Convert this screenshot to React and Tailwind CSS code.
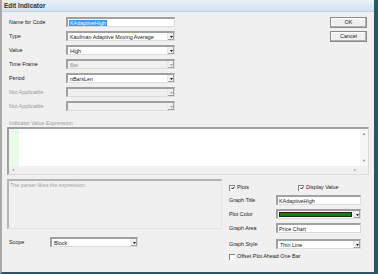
import React from 'react';

const Arrow = ({ disabled }) => (
  <div className="w-[7px] h-full bg-[#f0f0f0] border-l border-l-[#e6e6e6] flex items-center justify-center shadow-[inset_-1px_-1px_0_#a0a0a0]">
    <svg width="3" height="2" viewBox="0 0 3 2">
      <path d="M0 0 H3 L1.5 2 Z" fill={disabled ? '#a0a0a0' : '#111'} />
    </svg>
  </div>
);

const Combo = ({ value, disabled, className = '' }) => (
  <div
    className={`h-[10px] flex border-t-2 border-l-2 border-t-[#a0a0a0] border-l-[#a0a0a0] border-r border-b border-r-[#dcdcdc] border-b-[#dcdcdc] ${
      disabled ? 'bg-[#f0f0f0] text-[#9a9a9a]' : 'bg-white'
    } ${className}`}
  >
    <div className="flex-1 pl-[2px] leading-[8px] overflow-hidden whitespace-nowrap">{value}</div>
    <Arrow disabled={disabled} />
  </div>
);

const Input = ({ children, className = '' }) => (
  <div
    className={`h-[10px] bg-white border-t-2 border-l-2 border-t-[#a0a0a0] border-l-[#a0a0a0] border-r border-b border-r-[#dcdcdc] border-b-[#dcdcdc] pl-[1px] leading-[8px] whitespace-nowrap overflow-hidden ${className}`}
  >
    {children}
  </div>
);

const Check = ({ checked }) => (
  <div className="w-[6px] h-[6px] shrink-0 bg-white border-t border-l border-[#808080] border-r-[#e0e0e0] border-b-[#e0e0e0] flex items-center justify-center">
    {checked && (
      <svg width="4" height="4" viewBox="0 0 4 4">
        <path d="M0.4 1.8 L1.5 3 L3.6 0.6" stroke="#000" strokeWidth="1" fill="none" />
      </svg>
    )}
  </div>
);

const Button = ({ children }) => (
  <div className="h-[11px] bg-[#f0f0f0] border border-[#8a8a8a] shadow-[inset_-1px_-1px_0_#b0b0b0,inset_1px_1px_0_#ffffff] flex items-center justify-center">
    {children}
  </div>
);

const rows = [
  { label: 'Name for Code', kind: 'input' },
  { label: 'Type', value: 'Kaufman Adaptive Moving Average' },
  { label: 'Value', value: 'High' },
  { label: 'Time Frame', value: 'Bar', disabled: true },
  { label: 'Period', value: 'nBarsLen' },
  { label: 'Not Applicable', value: '', disabled: true, grayLabel: true },
  { label: 'Not Applicable', value: '', disabled: true, grayLabel: true },
];

export default function App() {
  return (
    <div className="w-[378px] h-[274px] bg-[#f0f0f0] flex flex-col overflow-hidden font-['Liberation_Sans',Arial,sans-serif] text-[5.4px] text-[#1a1a1a] border-l-2 border-l-[#a8a8a8] border-r-4 border-r-[#1d5a6b] border-b-2 border-b-[#1d5a6b]">
      <div className="h-[12px] shrink-0 bg-gradient-to-b from-[#e9f0f8] to-[#d3e2f1] border-b border-b-[#c2d3e5] pl-[2px] flex items-center font-bold text-[6.5px] text-[#333]">
        Edit Indicator
      </div>

      <div className="flex-1 flex flex-col pl-[5px] pr-[5px] pt-[5px]">
        <div className="flex justify-between">
          <div className="flex flex-col gap-[4px]">
            {rows.map((r, i) => (
              <div key={i} className="flex items-center">
                <div className={`w-[59px] pl-[2px] ${r.grayLabel ? 'text-[#9a9a9a]' : ''}`}>{r.label}</div>
                {r.kind === 'input' ? (
                  <Input className="w-[109px]">
                    <span className="bg-[#3399ff] text-white px-[1px]">KAdaptiveHigh</span>
                  </Input>
                ) : (
                  <Combo className="w-[109px]" value={r.value} disabled={r.disabled} />
                )}
              </div>
            ))}
          </div>
          <div className="flex flex-col gap-[3px] w-[37px] mr-[2px]">
            <Button>OK</Button>
            <Button>Cancel</Button>
          </div>
        </div>

        <div className="mt-[8px] h-[8px] pl-[2px] text-[#9a9a9a] leading-[8px]">Indicator Value Expression</div>

        <div className="h-[48px] flex flex-col border-t-2 border-l-2 border-t-[#a0a0a0] border-l-[#a0a0a0] border-r border-b border-r-[#dcdcdc] border-b-[#dcdcdc] bg-white">
          <div className="flex-1 flex">
            <div className="w-[10px] bg-[#eafbea]" />
            <div className="flex-1" />
            <div className="w-[8px] bg-[#f6f6f6] flex flex-col items-center justify-between py-[3px] text-[#8a8a8a] text-[4px] leading-[4px]">
              <span>▲</span>
              <span>▼</span>
            </div>
          </div>
          <div className="h-[8px] bg-[#f0f0f0] flex items-center justify-between pl-[3px] pr-[12px] text-[#8a8a8a] text-[4px]">
            <span>◂</span>
            <span>▸</span>
          </div>
        </div>

        <div className="flex mt-[4px]">
          <div className="w-[215px] flex flex-col">
            <div className="h-[50px] border-t-2 border-l-2 border-t-[#b4b4b4] border-l-[#b4b4b4] border-r border-b border-r-[#e4e4e4] border-b-[#e4e4e4] pl-[1px] text-[#a4a4a4] leading-[8px]">
              The parser likes the expression.
            </div>
            <div className="flex items-center mt-[8px]">
              <div className="w-[43px] pl-[2px]">Scope</div>
              <Combo className="w-[88px] h-[9px]" value="Block" />
            </div>
          </div>

          <div className="ml-[7px] flex flex-col pt-[5px] gap-[4px]">
            <div className="flex items-center h-[7px]">
              <div className="w-[69px] flex items-center gap-[2px]">
                <Check checked />
                <span>Plots</span>
              </div>
              <div className="flex items-center gap-[2px]">
                <Check checked />
                <span>Display Value</span>
              </div>
            </div>
            <div className="flex items-center">
              <div className="w-[47px]">Graph Title</div>
              <Input className="w-[85px]">KAdaptiveHigh</Input>
            </div>
            <div className="flex items-center">
              <div className="w-[47px]">Plot Color</div>
              <div className="w-[85px] h-[10px] flex bg-white border-t-2 border-l-2 border-t-[#a0a0a0] border-l-[#a0a0a0] border-r border-b border-r-[#dcdcdc] border-b-[#dcdcdc]">
                <div className="flex-1 p-[1px]">
                  <div className="h-full bg-[#008800] border border-[#222]" />
                </div>
                <Arrow />
              </div>
            </div>
            <div className="flex items-center">
              <div className="w-[47px]">Graph Area</div>
              <Input className="w-[85px]">Price Chart</Input>
            </div>
            <div className="flex items-center mt-[2px]">
              <div className="w-[47px]">Graph Style</div>
              <Combo className="w-[85px]" value="Thin Line" />
            </div>
            <div className="flex items-center h-[7px] gap-[2px] whitespace-nowrap">
              <Check />
              <span>Offset Plot Ahead One Bar</span>
            </div>
          </div>
        </div>
      </div>
    </div>
  );
}
